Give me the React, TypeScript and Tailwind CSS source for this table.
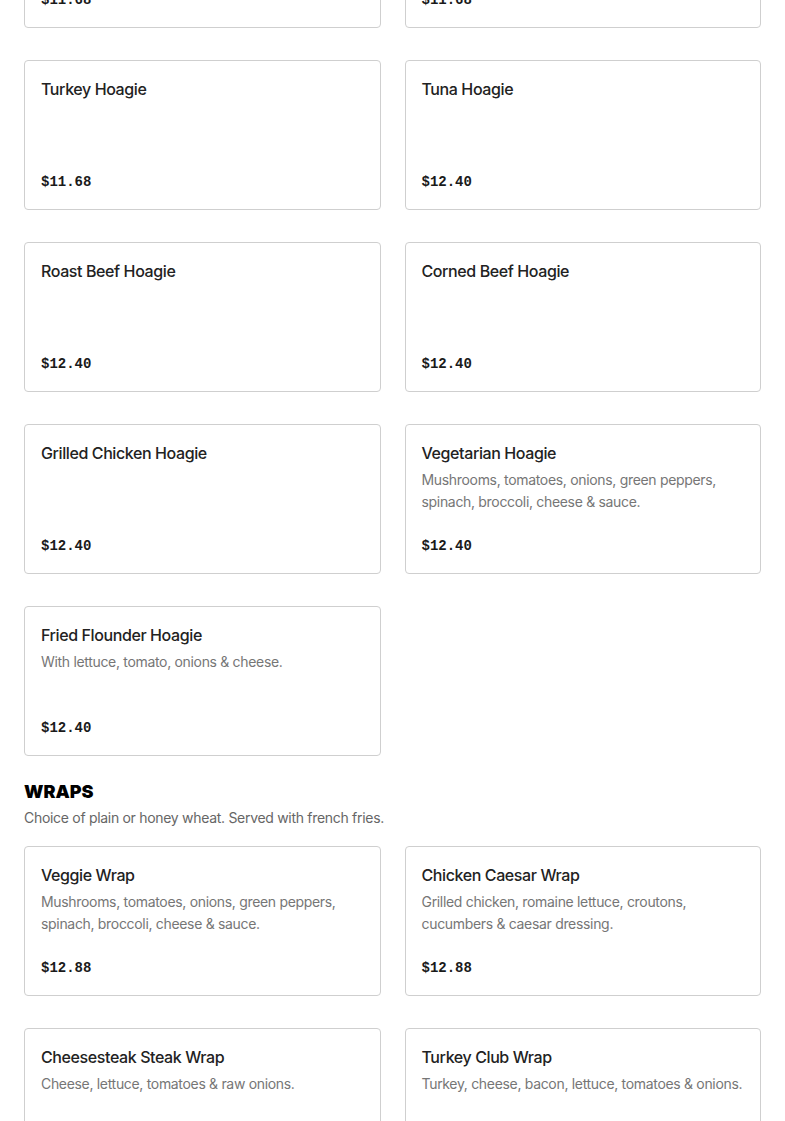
type Item = { name: string; desc?: string; price: string }

const hoagies: Item[] = [
  { name: 'Italian Hoagie', price: '$11.68' },
  { name: 'Ham Hoagie', price: '$11.68' },
  { name: 'Turkey Hoagie', price: '$11.68' },
  { name: 'Tuna Hoagie', price: '$12.40' },
  { name: 'Roast Beef Hoagie', price: '$12.40' },
  { name: 'Corned Beef Hoagie', price: '$12.40' },
  { name: 'Grilled Chicken Hoagie', price: '$12.40' },
  {
    name: 'Vegetarian Hoagie',
    desc: 'Mushrooms, tomatoes, onions, green peppers, spinach, broccoli, cheese & sauce.',
    price: '$12.40',
  },
  { name: 'Fried Flounder Hoagie', desc: 'With lettuce, tomato, onions & cheese.', price: '$12.40' },
]

const wraps: Item[] = [
  {
    name: 'Veggie Wrap',
    desc: 'Mushrooms, tomatoes, onions, green peppers, spinach, broccoli, cheese & sauce.',
    price: '$12.88',
  },
  {
    name: 'Chicken Caesar Wrap',
    desc: 'Grilled chicken, romaine lettuce, croutons, cucumbers & caesar dressing.',
    price: '$12.88',
  },
  { name: 'Cheesesteak Steak Wrap', desc: 'Cheese, lettuce, tomatoes & raw onions.', price: '$12.88' },
  { name: 'Turkey Club Wrap', desc: 'Turkey, cheese, bacon, lettuce, tomatoes & onions.', price: '$12.88' },
]

function MenuCard({ item }: { item: Item }) {
  return (
    <div className="flex flex-col min-h-[150px] rounded-[4px] border border-[#cfcfcf] bg-white px-4 pt-4 pb-[15px]">
      <h3 className="text-[16px] leading-6 font-medium tracking-[-0.4px] text-[#222]">{item.name}</h3>
      {item.desc && (
        <p className="mt-1 text-[14px] leading-[22px] tracking-[-0.32px] text-[#767676]">{item.desc}</p>
      )}
      <div className="mt-auto pt-5 font-['Liberation_Mono',monospace] text-[14px] leading-6 font-bold text-[#1a1a1a]">
        {item.price}
      </div>
    </div>
  )
}

export default function App() {
  return (
    <div className="min-h-screen bg-white px-6 font-['Inter',sans-serif] overflow-hidden">
      <div className="-mt-[122px] grid grid-cols-2 gap-x-6 gap-y-8">
        {hoagies.map(item => (
          <MenuCard key={item.name} item={item} />
        ))}
      </div>

      {/* wraps */}
      <section className="mt-6">
        <h2 className="text-[18px] leading-6 font-black text-black">WRAPS</h2>
        <p className="mt-[3px] text-[14px] leading-[22px] tracking-[-0.3px] text-[#666]">
          Choice of plain or honey wheat. Served with french fries.
        </p>
        <div className="mt-[17px] grid grid-cols-2 gap-x-6 gap-y-8">
          {wraps.map(item => (
            <MenuCard key={item.name} item={item} />
          ))}
        </div>
      </section>
    </div>
  )
}
